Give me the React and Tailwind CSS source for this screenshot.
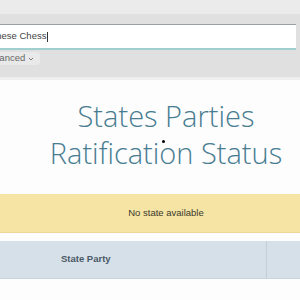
export default function App() {
  return (
    <div className="w-[300px] h-[300px] overflow-hidden bg-[#fdfdfd] relative" style={{ fontFamily: '"Liberation Sans", Arial, sans-serif' }}>
      {/* search area */}
      <div className="bg-[#ebebeb] h-[14px]" />
      <div className="bg-[#e0e0e0] pt-[10px] pb-[12px]">
        <div className="ml-[-26px] w-[322px] h-[26px] bg-white border-t border-t-[#9a9fa3] border-b-2 border-b-[#9fcfcf] flex items-center pl-[8px] text-[9.5px] text-[#444]">
          Chinese Chess<span className="w-px h-[10px] bg-[#333] ml-px" />
        </div>
        <div className="mt-[2px] ml-[-22px] w-[62px] h-[13px] bg-[#e9e9e9] rounded-sm flex items-center pl-[5px] text-[9.5px] text-[#666]">
          Advanced
          <svg className="ml-[3px]" width="6" height="4" viewBox="0 0 6 4"><path d="M1 1l2 2 2-2" fill="none" stroke="#777" strokeWidth="1" /></svg>
        </div>
      </div>
      <div className="h-[3px] bg-[#eeeeee]" />

      {/* title */}
      <div className="pt-[17px] flex justify-center pl-[32px]">
        <h1 className="text-center text-[29px] leading-[37px] font-light text-[#477c91]" style={{ fontFamily: '"Open Sans", sans-serif' }}>
          States Parties
          <br />
          Ratification Status
        </h1>
      </div>
      <div className="absolute left-[162px] top-[140px] w-[3px] h-[3px] rounded-full bg-black" />

      {/* alert */}
      <div className="mt-[23px] h-[39px] bg-[#f6e4a5] border-b border-[#eed79a] flex items-center justify-center pl-[32px] text-[9.5px] text-[#3a3a2a]">
        No state available
      </div>

      {/* table header */}
      <div className="mt-[8px] h-[38px] bg-[#d5e0e8] flex border-b border-[#c9d5de]">
        <div className="w-[267px] border-r border-[#c3cfd8] flex items-center pl-[61px] text-[9.5px] font-bold text-[#4b5866]">
          State Party
        </div>
        <div className="flex-1" />
      </div>
    </div>
  )
}
